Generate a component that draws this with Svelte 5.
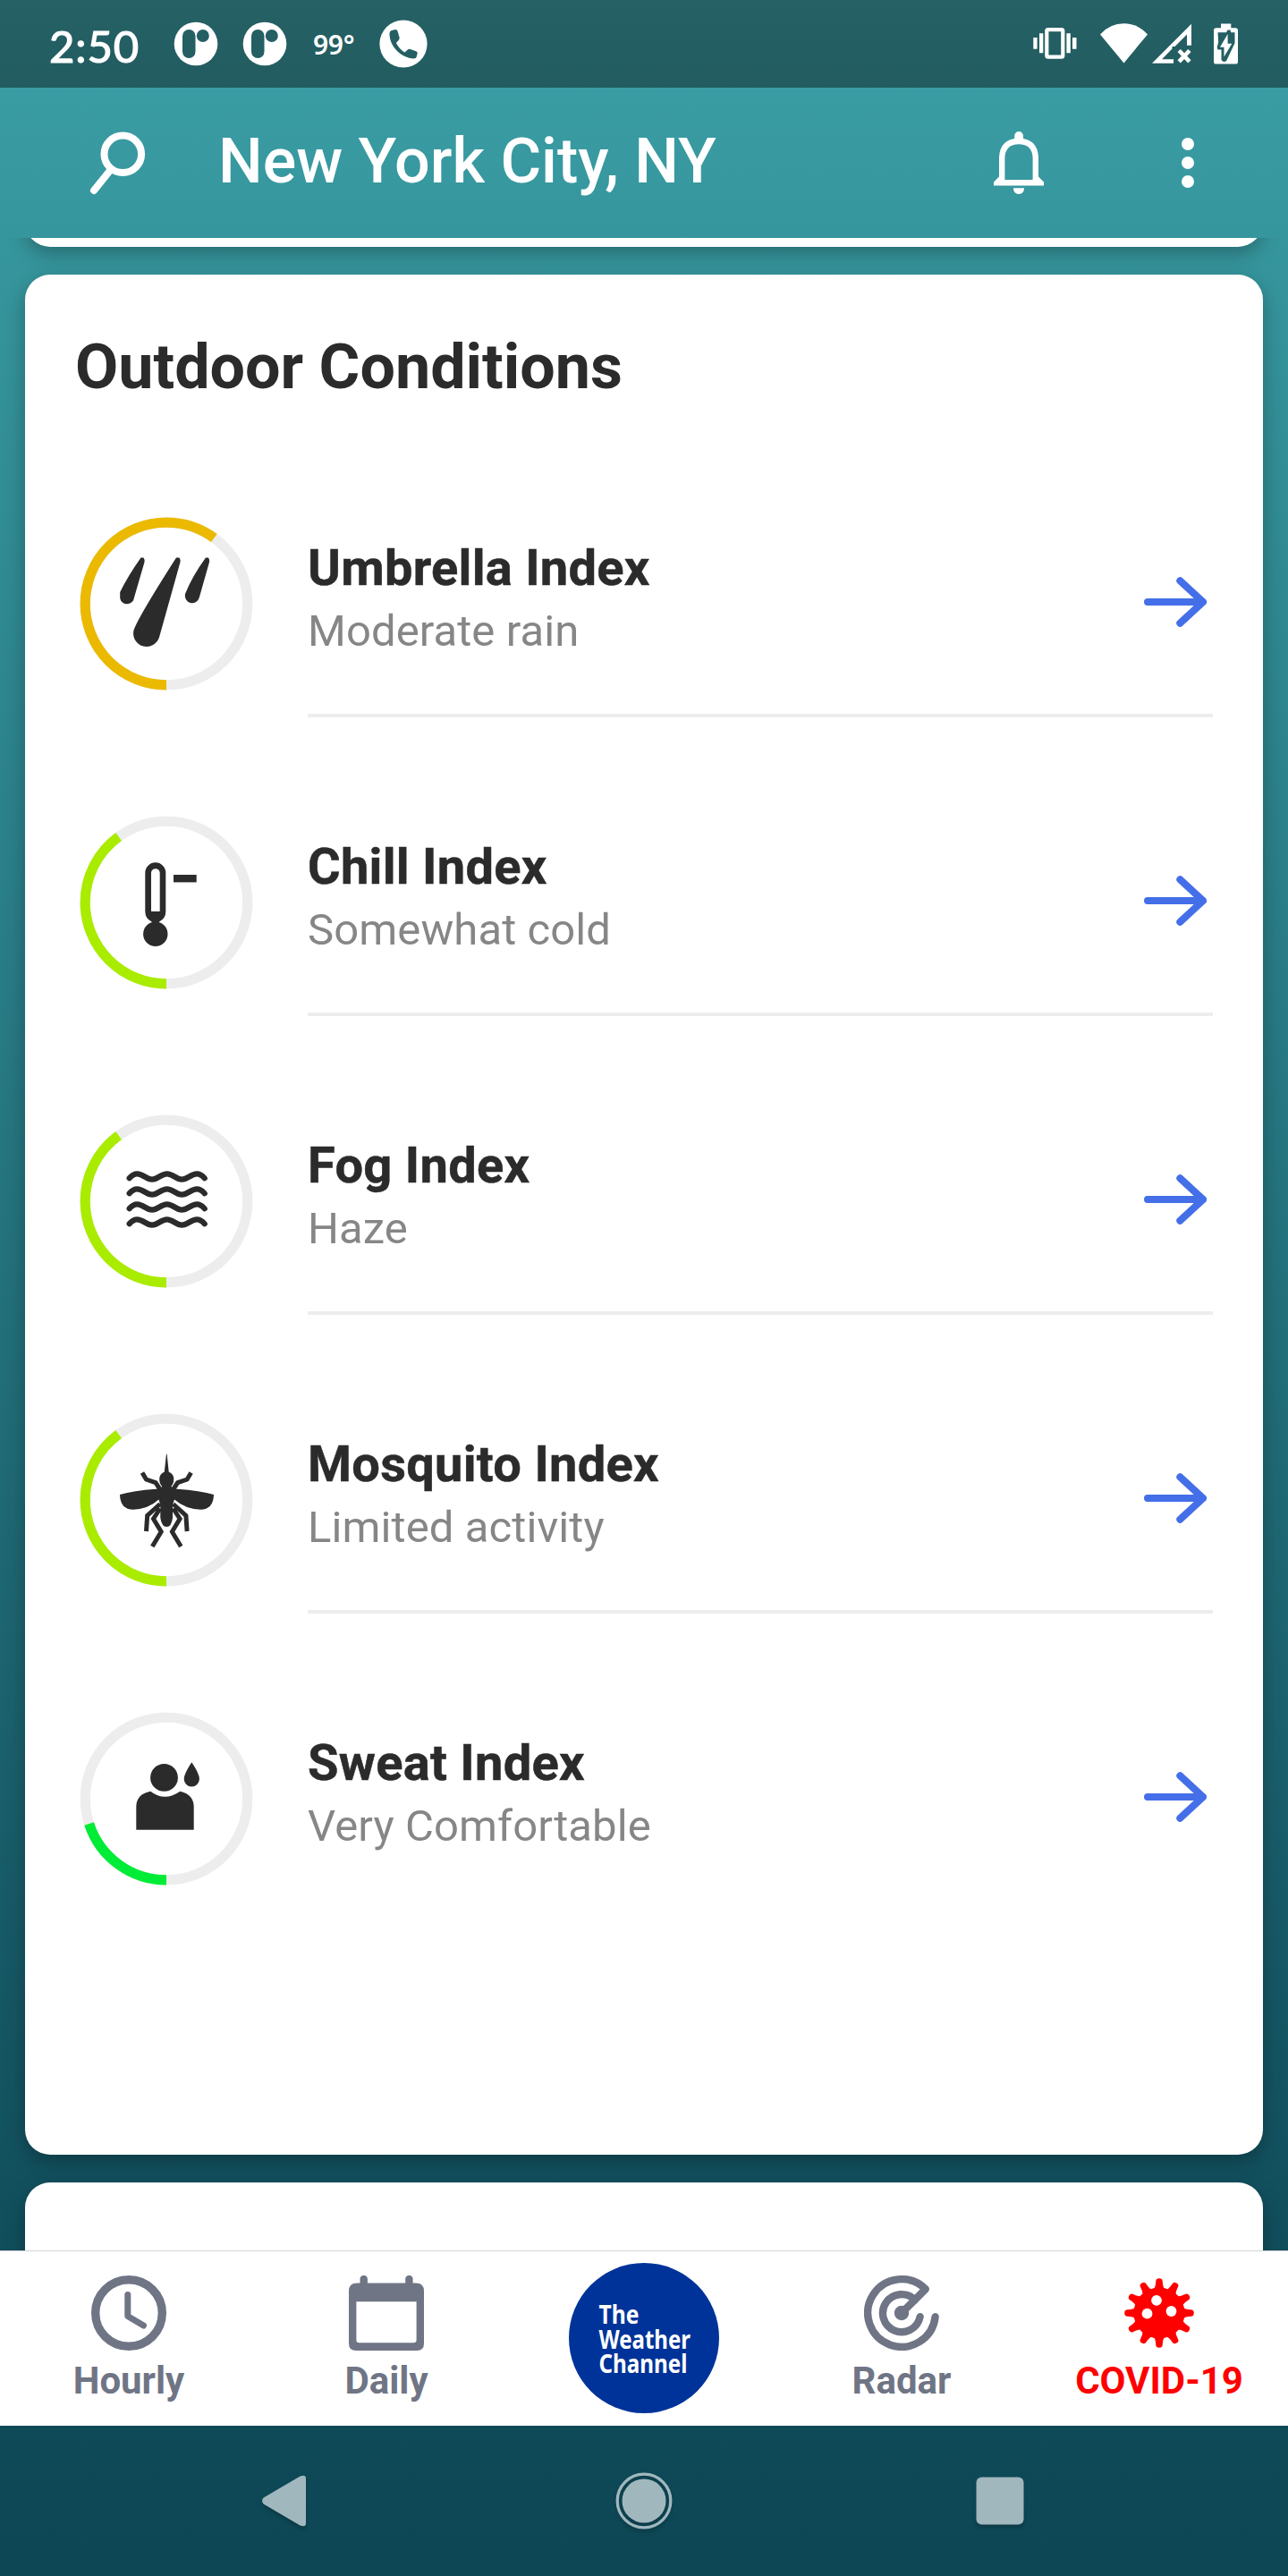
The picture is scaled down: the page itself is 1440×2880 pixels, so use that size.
<script>
  const rows = [
    { id: 'umbrella', title: 'Umbrella Index', note: 'Moderate rain', level: 60, color: '#ebb900' },
    { id: 'chill', title: 'Chill Index', note: 'Somewhat cold', level: 40, color: '#a9ec00' },
    { id: 'fog', title: 'Fog Index', note: 'Haze', level: 40, color: '#a9ec00' },
    { id: 'mosquito', title: 'Mosquito Index', note: 'Limited activity', level: 40, color: '#a9ec00' },
    { id: 'sweat', title: 'Sweat Index', note: 'Very Comfortable', level: 20, color: '#00ec36' }
  ];
  const waves = [0, 17, 34, 51];
  const spikes = Array.from({ length: 12 }, (_, i) => i * 30);
</script>

<div class="screen">
  <div class="status">
    <span class="time">2:50</span>
    <svg class="app" width="50" height="50" viewBox="0 0 50 50">
      <circle cx="25" cy="25" r="24.3" fill="#fff" />
      <rect x="10" y="9" width="14.5" height="32" rx="7.2" />
      <circle cx="32.8" cy="16" r="7" />
    </svg>
    <svg class="app second" width="50" height="50" viewBox="0 0 50 50">
      <circle cx="25" cy="25" r="24.3" fill="#fff" />
      <rect x="10" y="9" width="14.5" height="32" rx="7.2" />
      <circle cx="32.8" cy="16" r="7" />
    </svg>
    <span class="temp">99°</span>
    <svg class="phone" width="54" height="54" viewBox="0 0 54 54">
      <circle cx="27" cy="27" r="26.6" fill="#fff" />
      <path d="M14 12l4-1q2 0 2.600 2l2 7q.3 1.600-1 3l-2.700 3q3.500 7 9.500 10.500l3.500-3q1.200-1 2.700-.6l6.500 2.400q2 .8 1.600 2.800l-1 3.500q-.6 2-3 2C24 42.500 11 29.500 11.500 15q.2-2.400 2.500-3z" />
    </svg>
    <div class="spacer"></div>
    <svg width="232" height="54" viewBox="1154 22 232 54" fill="#fff">
      <rect x="1170.300" y="33.100" width="18" height="30.600" rx="1.500" fill="none" stroke="#fff" stroke-width="4.200" />
      <path d="M1162 37.300h4.300v22h-4.300zM1155.300 42h4.300v12.700h-4.300zM1192.400 37.300h4.400v22h-4.400zM1199 42h4.500v12.700h-4.500z" />
      <path d="M1230 38.400Q1241 26.300 1256.500 26.300T1283 38.400L1256.500 70.400z" />
      <path d="M1288 70.700L1332 26.700V50.700H1327V38.500L1313.500 52H1310.500V54.500L1299 66.200H1312V70.700z" />
      <path d="M1318.200 56.500l11.700 12.300m0-12.300l-11.700 12.300" stroke="#fff" stroke-width="4.600" />
      <path d="M1365 26.500h11.300v4.700h5q2.700 0 2.700 2.700v35q0 2.700-2.700 2.700h-21.600q-2.700 0-2.700-2.700v-35q0-2.700 2.700-2.700h5.300z" />
      <path d="M1361.500 36.300h9.500l1.500-2.800h3l.7 2.800h4.300v12l-9.500 20q-2 1.500-4 .2l-1.500-1.500V55.500h-4l-.8-2.500 1.500-6z" fill="#235f63" />
      <path d="M1372.600 38v10.700h4.700L1368.500 63.500V52.800H1364z" />
    </svg>
  </div>

  <header>
    <svg class="search" width="66" height="74" viewBox="99 145 66 74" fill="none" stroke="#fff">
      <circle cx="137.300" cy="172.300" r="20.800" stroke-width="8" />
      <path d="M123.500 190L105 213" stroke-width="8" stroke-linecap="round" />
    </svg>
    <h1>New York City, NY</h1>
    <svg class="bell" width="58" height="74" viewBox="1110 145 58 74">
      <path d="M1120.200 201V176q1-18 18.800-18t18.800 18V201" fill="none" stroke="#fff" stroke-width="6.400" />
      <path d="M1134.200 158v-6a4.900 4.900 0 0 1 9.800 0v6zM1117 197.500l-6 6V207.500h56V203.500l-6-6-3 3.500h-37zM1133 210.300h12q0 6.700-6 6.700t-6-6.700z" fill="#fff" />
    </svg>
    <svg width="16" height="58" viewBox="0 0 16 58" fill="#fff">
      <circle cx="8" cy="8" r="7" /><circle cx="8" cy="29" r="7" /><circle cx="8" cy="50" r="7" />
    </svg>
  </header>

  <main>
    <div class="card previous"></div>
    <section class="card">
      <h2>Outdoor Conditions</h2>
      {#each rows as row (row.id)}
        <div class="row">
          <svg class="gauge" width="194" height="194" viewBox="-97 -97 194 194" fill="#2b2b2b">
            <circle r="90.800" fill="none" stroke="#ededed" stroke-width="11.200" />
            <circle r="90.800" fill="none" stroke={row.color} stroke-width="11.200" pathLength="100" stroke-dasharray="{row.level} 100" transform="rotate(90)" />
            {#if row.id === 'umbrella'}
              <path d="M11-51.500h3.500q1.500 2 1 5L-8 37.500A14.800 14.800 0 0 1-36.700 30.500Q-34 19 11-51.500z" />
              <path d="M-28.500-51.500h3q1.500 2 1 5L-36-7A8 8 0 0 1-51.800-6V-13Q-43-31-28.500-51.500zM44-51.500h3q1.500 2 1 5L36.800-7A8 8 0 0 1 21-11Q29-31 44-51.500z" />
            {:else if row.id === 'chill'}
              <path fill-rule="evenodd" d="M-23.700-33.200a11.500 11.500 0 0 1 23 0V10q0 8-7.300 11.500Q-8 23-12.200 23T-16.400 21.500Q-23.700 18-23.700 10zM-17 10H-7.300V-33a4.850 4.850 0 0 0-9.700 0z" />
              <circle cx="-12.200" cy="35.300" r="13.700" />
              <path d="M8-31h25.700v8.400H8z" />
            {:else if row.id === 'fog'}
              <g fill="none" stroke="#2b2b2b" stroke-width="6.300" stroke-linecap="round">
                {#each waves as y (y)}
                  <path transform="translate(0 {y})" d="M-41.300-25.800Q-37-30.600-32.600-30.600C-26-30.600-22.500-24.400-16-24.400S-6-30.600.7-30.600 10.800-24.400 17.300-24.400 27.500-30.600 34-30.600Q38.500-30.600 42.700-25.800" />
                {/each}
              </g>
            {:else if row.id === 'mosquito'}
              <path d="M0-51.500L.6-51.500 2.700-31.500Q8.300-29 8.300-23.500 8.300-18 5.500-15.500L6.500-13 12-12.300Q38-10.500 53-6 52.500 10.700 38 10.700 21 10 9-.5L7 5.500V20q-1.200 10-6.700 10T-6.700 20V5.500L-8.500-.5Q-20 10-37 10.700-51.500 10.700-52-6-37-10.500-11.500-12.300L-6-13-5-15.500Q-7.800-18-7.800-23.500-7.800-29-2.200-31.500z" />
              <g fill="none" stroke="#2b2b2b" stroke-width="5">
                <path d="M-27-30.500L-22.500-23-12-19.300-6.500-11M-7 4.500L-21.300 17.500-22.500 35M-7 9.500L-14.500 21-5.800 35.500-15.700 52" />
                <path transform="translate(.6 0) scale(-1 1)" d="M-27-30.500L-22.500-23-12-19.300-6.500-11M-7 4.500L-21.300 17.500-22.500 35M-7 9.500L-14.500 21-5.800 35.500-15.700 52" />
              </g>
            {:else}
              <circle cx="-2.500" cy="-23.600" r="15.400" />
              <path d="M28.300-40.800Q37-28 36.900-22a8.600 8.600 0 0 1-17.200 0Q19.700-28 28.300-40.800z" />
              <path d="M-33.700 34.700V9Q-33.500-5.300-17.700-8.300-10-2.300-1.500-2.300T15.200-8.300Q30.500-5 30.700 9V34.700z" />
            {/if}
          </svg>
          <div class="text">
            <div>
              <h3>{row.title}</h3>
              <p>{row.note}</p>
            </div>
            <svg class="arrow" width="74" height="60" viewBox="0 0 74 60" fill="none" stroke="#446fe8" stroke-width="8" stroke-linecap="round" stroke-linejoin="round">
              <path d="M6 30H68M42.300 6.200L68 30 42.300 53.800" />
            </svg>
          </div>
        </div>
      {/each}
    </section>
    <div class="card next"></div>
  </main>

  <nav class="tabs">
    <div class="tab">
      <svg width="84" height="84" viewBox="-42 -42 84 84" fill="none" stroke="#6f7585">
        <circle r="37.300" stroke-width="9.400" />
        <path d="M-1.200-20.500V3.500L16.500 14" stroke-width="7" stroke-linecap="round" stroke-linejoin="round" />
      </svg>
      <span>Hourly</span>
    </div>
    <div class="tab">
      <svg width="84" height="84" viewBox="0 0 84 84" fill="#6f7585">
        <path fill-rule="evenodd" d="M12.500 8.500V4a4.200 4.200 0 0 1 8.400 0V8.500H63.200V4a4.200 4.200 0 0 1 8.400 0V8.500H75q9 0 9 9V76q0 8-8 8H8q-8 0-8-8V17.500q0-9 9-9zM8.400 29.300V72q0 3.300 3.300 3.300H72.300q3.300 0 3.300-3.300V29.300z" />
      </svg>
      <span>Daily</span>
    </div>
    <div class="brand">
      <svg width="168" height="168" viewBox="0 0 168 168">
        <circle cx="84" cy="84" r="84" fill="#003399" />
        <g class="logo-text">
          <text x="33.500" y="68" textLength="45" lengthAdjust="spacingAndGlyphs">The</text>
          <text x="33.500" y="95.500" textLength="102.500" lengthAdjust="spacingAndGlyphs">Weather</text>
          <text x="33.500" y="123" textLength="99" lengthAdjust="spacingAndGlyphs">Channel</text>
        </g>
      </svg>
    </div>
    <div class="tab">
      <svg width="84" height="84" viewBox="-42 -42 84 84" fill="none" stroke="#6f7585" stroke-width="8.400" stroke-linecap="round" stroke-linejoin="round">
        <path d="M37.600 4.200A37.800 37.800 0 1 1 26.800-26.700L0 0" />
        <path d="M20.600 4.200A21 21 0 1 1 14.800-14.800" />
        <circle r="8.200" fill="#6f7585" stroke="none" />
      </svg>
      <span>Radar</span>
    </div>
    <div class="tab alert">
      <svg width="84" height="84" viewBox="-42 -42 84 84" fill="#f00">
        <circle r="28.500" />
        {#each spikes as angle (angle)}
          <path transform="rotate({angle})" d="M-6.500-26Q-4-29-3.700-35.500a3.700 3.300 0 0 1 7.400 0Q4-29 6.500-26z" />
        {/each}
        <g fill="#fff"><circle cx="-3" cy="-14.200" r="5.900" /><circle cx="-13.500" cy=".7" r="5.900" /><circle cx="13.500" cy="-2" r="5.900" /></g>
      </svg>
      <span>COVID-19</span>
    </div>
  </nav>

  <div class="system">
    <svg width="52" height="60" viewBox="0 0 52 60"><path d="M2.600 26.500L43.500 2.500Q50 0 50 5V55Q50 60 43.500 57.500L2.600 33.500Q-.5 30 2.600 26.500z" /></svg>
    <svg class="home" width="64" height="64" viewBox="-32 -32 64 64"><circle r="24.500" /><circle r="29.800" fill="none" stroke="#a1b7be" stroke-width="3.300" /></svg>
    <svg width="54" height="54" viewBox="0 0 54 54"><rect x=".5" y=".5" width="53" height="53" rx="6" /></svg>
  </div>
</div>

<style>
  :global(body) { margin: 0; }
  .screen {
    width: 1440px;
    height: 2880px;
    display: flex;
    flex-direction: column;
    overflow: hidden;
    font-family: Roboto, sans-serif;
    color: #2b2b2b;
    background: linear-gradient(#3c9fa7 0, #36969d 266px, #308a92 640px, #12505e 2450px, #0d4654 2880px);
  }
  svg { display: block; flex: none; }
  h1, h2, h3, p { margin: 0; }
  .spacer { flex: 1; }

  .status {
    height: 98px;
    box-sizing: border-box;
    flex: none;
    display: flex;
    align-items: center;
    padding: 0 54px 0 55px;
    color: #fff;
    fill: #235f63;
    background: linear-gradient(#256165, #225c60);
  }
  .time {
    width: 139px;
    font: 400 49px/60px Lato, sans-serif;
    letter-spacing: 0.9px;
    -webkit-text-stroke: 1.2px #fff;
    padding-top: 3px;
  }
  .second { margin-left: 27px; }
  .temp {
    width: 74px;
    margin-left: 29px;
    font: 600 30px/40px "Noto Sans", sans-serif;
    letter-spacing: -0.3px;
    padding-top: 1px;
  }

  header {
    height: 168px;
    flex: none;
    display: flex;
    align-items: center;
    box-sizing: border-box;
    padding: 0 104px 0 99px;
    color: #fff;
  }
  h1 {
    flex: 1;
    margin-left: 79px;
    font-size: 70px;
    line-height: 82px;
    font-weight: 500;
    padding-bottom: 4px;
  }
  .bell { margin-right: 152px; }

  main {
    flex: 1;
    min-height: 0;
    overflow: hidden;
    display: flex;
    flex-direction: column;
    gap: 31px;
    padding: 0 28px;
  }
  .card {
    flex: none;
    height: 2102px;
    border-radius: 28px;
    background: #fff;
    box-shadow: 0 8px 22px rgba(0, 0, 0, 0.28);
  }
  .previous { height: 110px; margin-top: -100px; }
  .next { height: 300px; }
  h2 {
    height: 99px;
    padding: 62px 56px 0;
    font-size: 70px;
    line-height: 82px;
    font-weight: 700;
  }
  .row {
    height: 334px;
    display: flex;
    padding: 0 56px 0 61px;
  }
  .gauge { margin: 110px 61px 0 0; }
  .text {
    flex: 1;
    display: flex;
    justify-content: space-between;
    box-sizing: border-box;
    padding-top: 134px;
    border-bottom: 4px solid #ededed;
  }
  .row:last-child .text { border-color: transparent; }
  h3 {
    font-size: 56px;
    line-height: 66px;
    font-weight: 700;
    letter-spacing: 0.28px;
    -webkit-text-stroke: 0.5px #2b2b2b;
  }
  p {
    margin-top: 9px;
    font-size: 49px;
    line-height: 58px;
    letter-spacing: 0.1px;
    color: #868686;
  }
  .arrow { margin: 41px 5px 0 0; }

  .tabs {
    height: 196px;
    box-sizing: border-box;
    flex: none;
    display: grid;
    grid-template-columns: repeat(5, 1fr);
    justify-items: center;
    background: #fff;
    border-top: 1px solid #d3d3d3;
  }
  .tab {
    display: flex;
    flex-direction: column;
    align-items: center;
    padding-top: 27px;
    color: #6f7585;
    font-size: 42px;
    line-height: 50px;
    font-weight: 700;
  }
  .tab span { margin-top: 9px; }
  .alert { color: #f00; }
  .brand { padding-top: 13px; }
  .logo-text { fill: #fff; font: 700 29px "Noto Sans", sans-serif; }

  .system {
    height: 168px;
    flex: none;
    display: flex;
    align-items: center;
    justify-content: space-between;
    box-sizing: border-box;
    padding: 0 295px 0 292px;
    fill: #a1b7be;
  }
  .home { margin-left: 5px; }
  .system svg { filter: drop-shadow(0 3px 2px rgba(0, 0, 0, 0.2)); }
</style>
